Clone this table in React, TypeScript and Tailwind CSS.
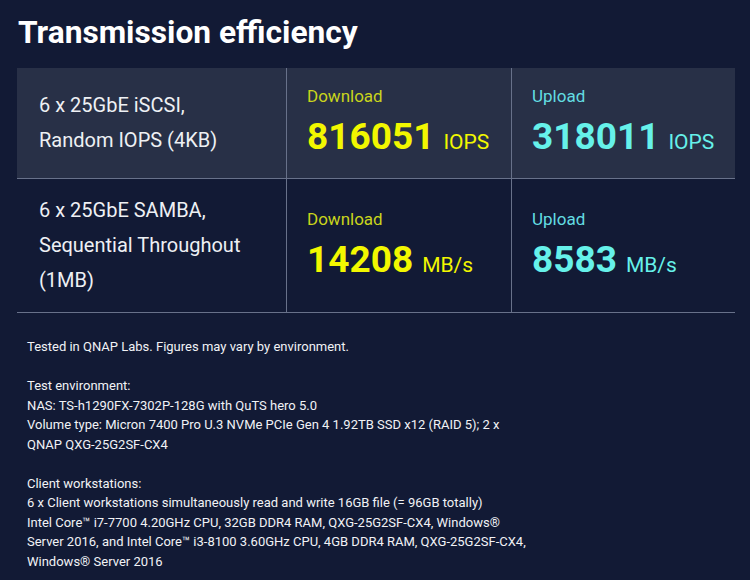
import React from "react";

type Cell = { label: string; value: string; unit: string; tone: "dl" | "ul" };

const rows: { title: string[]; cells: Cell[]; shaded: boolean }[] = [
  {
    title: ["6 x 25GbE iSCSI,", "Random IOPS (4KB)"],
    shaded: true,
    cells: [
      { label: "Download", value: "816051", unit: "IOPS", tone: "dl" },
      { label: "Upload", value: "318011", unit: "IOPS", tone: "ul" },
    ],
  },
  {
    title: ["6 x 25GbE SAMBA,", "Sequential Throughout", "(1MB)"],
    shaded: false,
    cells: [
      { label: "Download", value: "14208", unit: "MB/s", tone: "dl" },
      { label: "Upload", value: "8583", unit: "MB/s", tone: "ul" },
    ],
  },
];

function Metric({ c }: { c: Cell }) {
  const labelCls = c.tone === "dl" ? "text-[#c9d51c]" : "text-[#63dde2]";
  const valCls = c.tone === "dl" ? "text-[#f2f700]" : "text-[#66f1ea]";
  return (
    <div className="flex flex-col justify-center pl-[20px] pb-[3px] border-l border-[#68718a]">
      <div className={`text-[17px] leading-[24px] ${labelCls}`}>{c.label}</div>
      <div className={`flex items-baseline mt-[7px] ${valCls}`}>
        <span className="text-[37px] leading-[44px] font-bold">{c.value}</span>
        <span className="text-[21px] ml-[9px]">{c.unit}</span>
      </div>
    </div>
  );
}

export default function App() {
  return (
    <div
      className="w-[750px] h-[580px] bg-[#121a35] text-white overflow-hidden"
      style={{ fontFamily: "Roboto, 'Noto Sans', sans-serif" }}
    >
      <h1 className="text-[31.7px] leading-[40px] font-bold pl-[18px] pt-[13px]">
        Transmission efficiency
      </h1>
      <div className="ml-[17px] w-[718px] mt-[15px]">
        {rows.map((r, i) => (
          <div
            key={i}
            className={`grid grid-cols-[269px_225px_224px] border-b border-[#68718a] ${
              r.shaded ? "bg-[#283047] h-[111px]" : "h-[134px]"
            }`}
          >
            <div className="flex flex-col justify-center pl-[22px] text-[20px] leading-[35px] text-[#eef0f4]">
              {r.title.map((t, j) => (
                <div key={j}>{t}</div>
              ))}
            </div>
            {r.cells.map((c, j) => (
              <Metric key={j} c={c} />
            ))}
          </div>
        ))}
      </div>
      <div className="pl-[27px] pt-[24px] text-[13px] leading-[19.5px] text-[#f1f2f5]">
        <p>Tested in QNAP Labs. Figures may vary by environment.</p>
        <p className="mt-[19.5px]">Test environment:</p>
        <p>NAS: TS-h1290FX-7302P-128G with QuTS hero 5.0</p>
        <p className="w-[490px]">
          Volume type: Micron 7400 Pro U.3 NVMe PCIe Gen 4 1.92TB SSD x12 (RAID 5); 2 x QNAP QXG-25G2SF-CX4
        </p>
        <p className="mt-[19.5px]">Client workstations:</p>
        <p>6 x Client workstations simultaneously read and write 16GB file (= 96GB totally)</p>
        <p className="w-[510px]">
          Intel Core™ i7-7700 4.20GHz CPU, 32GB DDR4 RAM, QXG-25G2SF-CX4, Windows® Server 2016, and Intel Core™ i3-8100 3.60GHz CPU, 4GB DDR4 RAM, QXG-25G2SF-CX4, Windows® Server 2016
        </p>
      </div>
    </div>
  );
}
